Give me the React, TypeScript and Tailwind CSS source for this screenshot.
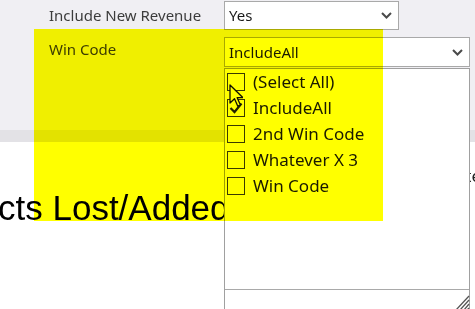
import React from 'react';

function Chevron() {
  return (
    <svg width="11" height="7" viewBox="0 0 11 7" fill="none">
      <path d="M1 1l4.5 4.5L10 1" stroke="#4a4a4a" strokeWidth="2" />
    </svg>
  );
}

function Select({ value, className }: { value: string; className: string }) {
  return (
    <div className={`flex items-center justify-between border border-[#a9a9a9] bg-white pl-[4px] pr-[6px] text-[15px] text-[#1a1a1a] ${className}`}>
      <span>{value}</span>
      <Chevron />
    </div>
  );
}

const items = [
  { label: '(Select All)', checked: false },
  { label: 'IncludeAll', checked: true },
  { label: '2nd Win Code', checked: false },
  { label: 'Whatever X 3', checked: false },
  { label: 'Win Code', checked: false },
];

export default function App() {
  return (
    <div className="relative isolate h-[309px] w-[475px] overflow-hidden bg-white font-['Noto_Sans',sans-serif]">
      {/* parameter area */}
      <div className="flex h-[130px] flex-col gap-[7px] bg-[#f0eff3] pl-[49px] pt-[1px]">
        <div className="flex items-center">
          <span className="w-[175px] text-[15px] text-[#3c3c3c]">Include New Revenue</span>
          <Select value="Yes" className="h-[29px] w-[175px]" />
        </div>
        <div className="flex items-start">
          <span className="w-[175px] pt-[1px] text-[15px] text-[#3c3c3c]">Win Code</span>
          <Select value="IncludeAll" className="h-[30px] w-[246px]" />
        </div>
      </div>
      <div className="h-[12px] bg-[#e3e2e6]" />

      {/* report body */}
      <div className="flex flex-col">
        <div className="flex h-[46px] items-end justify-end">
          <span className="mr-[-6px] text-[17px] text-[#222]">Date</span>
        </div>
        <div className="ml-[-2px] mt-[2px] whitespace-nowrap font-['Liberation_Sans',Arial,sans-serif] text-[35px] leading-none text-black">
          cts Lost/Added
        </div>
      </div>

      {/* dropdown list */}
      <div className="absolute left-[224px] top-[68px] flex h-[260px] w-[246px] flex-col border border-[#a0a0a0] bg-white">
        <div className="flex h-[220px] flex-col pl-[2px]">
          {items.map((item) => (
            <div key={item.label} className="flex h-[26px] items-center gap-[8px]">
              <div className="flex h-[18px] w-[18px] items-center justify-center border border-[#3a3a3a] bg-white">
                {item.checked && (
                  <svg width="14" height="12" viewBox="0 0 14 12" fill="none">
                    <path d="M1.5 6l4 4 7-8.5" stroke="#222" strokeWidth="2.2" />
                  </svg>
                )}
              </div>
              <span className="text-[17px] text-[#1a1a1a]">{item.label}</span>
            </div>
          ))}
        </div>
        <div className="relative flex-1 border-t border-[#a9a9a9]">
          <svg className="absolute left-[230px] top-[3px]" width="16" height="18" viewBox="0 0 16 18">
            <path d="M14 3L1 17M14 7L5 17M14 11L9 17M14 15L12 17" stroke="#555" strokeWidth="1.3" />
          </svg>
        </div>
      </div>

      {/* mouse cursor */}
      <svg className="absolute left-[229px] top-[84px]" width="14" height="24" viewBox="0 0 14 24">
        <path d="M1 1v18l4.5-4.3 3.3 7.5 2.6-1.2-3.2-7.3H14z" fill="#fff" stroke="#111" strokeWidth="1.3" strokeLinejoin="round" />
      </svg>

      {/* highlighter */}
      <div className="pointer-events-none absolute left-[34px] top-[29px] h-[192px] w-[349px] bg-[#ffff00] mix-blend-multiply" />
    </div>
  );
}
